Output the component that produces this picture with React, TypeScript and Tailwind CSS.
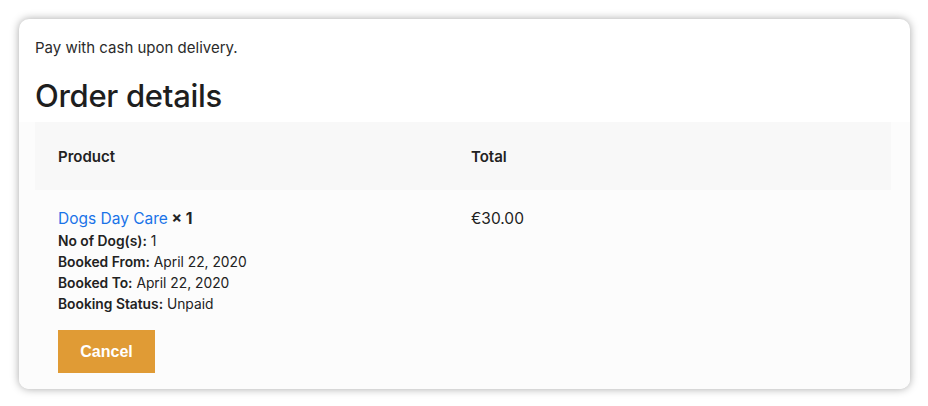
import React from 'react';

const details: [string, string][] = [
  ['No of Dog(s):', '1'],
  ['Booked From:', 'April 22, 2020'],
  ['Booked To:', 'April 22, 2020'],
  ['Booking Status:', 'Unpaid'],
];

const App: React.FC = () => {
  return (
    <div className="w-[928px] h-[406px] bg-white p-[19px] font-['Inter','Liberation_Sans',sans-serif] text-[#222]">
      <div className="w-[891px] h-[370px] rounded-[10px] bg-white shadow-[0_0_8px_rgba(0,0,0,0.35)] overflow-hidden flex flex-col">
        <div className="px-4 pt-[17px]">
          <p className="text-[15px] leading-6 text-[#2b2b2b]">Pay with cash upon delivery.</p>
          <h2 className="mt-[17px] mb-[7px] text-[31px] leading-[38px] font-medium text-[#1e1e1e] tracking-[-0.3px]">
            Order details
          </h2>
        </div>

        <div className="flex-1 flex bg-[#fcfcfc]">
          <div className="ml-4 w-[856px] flex flex-col">
            {/* header row */}
            <div className="h-[68px] pt-[2px] bg-[#f8f8f8] flex items-center text-[15px] font-semibold text-[#222]">
              <div className="w-[413px] pl-[23px]">Product</div>
              <div className="pl-[23px]">Total</div>
            </div>

            {/* body row */}
            <div className="flex pt-[17px]">
              <div className="w-[413px] pl-[23px]">
                <div className="text-[15.5px] leading-6">
                  <a href="#" className="text-[#1a73e8]">Dogs Day Care</a>
                  <strong className="font-bold text-[#222]"> × 1</strong>
                </div>
                <ul className="text-[13.8px] leading-[21px] text-[#222]">
                  {details.map(([label, value]) => (
                    <li key={label}>
                      <strong className="font-semibold">{label}</strong> {value}
                    </li>
                  ))}
                </ul>
                <button className="mt-[15px] w-[97px] h-[43px] bg-[#e09b35] text-white text-[16px] font-bold font-['Liberation_Sans',sans-serif]">
                  Cancel
                </button>
              </div>
              <div className="pl-[23px] text-[15.5px] leading-6 text-[#222]">€30.00</div>
            </div>
          </div>
        </div>
      </div>
    </div>
  );
};

export default App;
